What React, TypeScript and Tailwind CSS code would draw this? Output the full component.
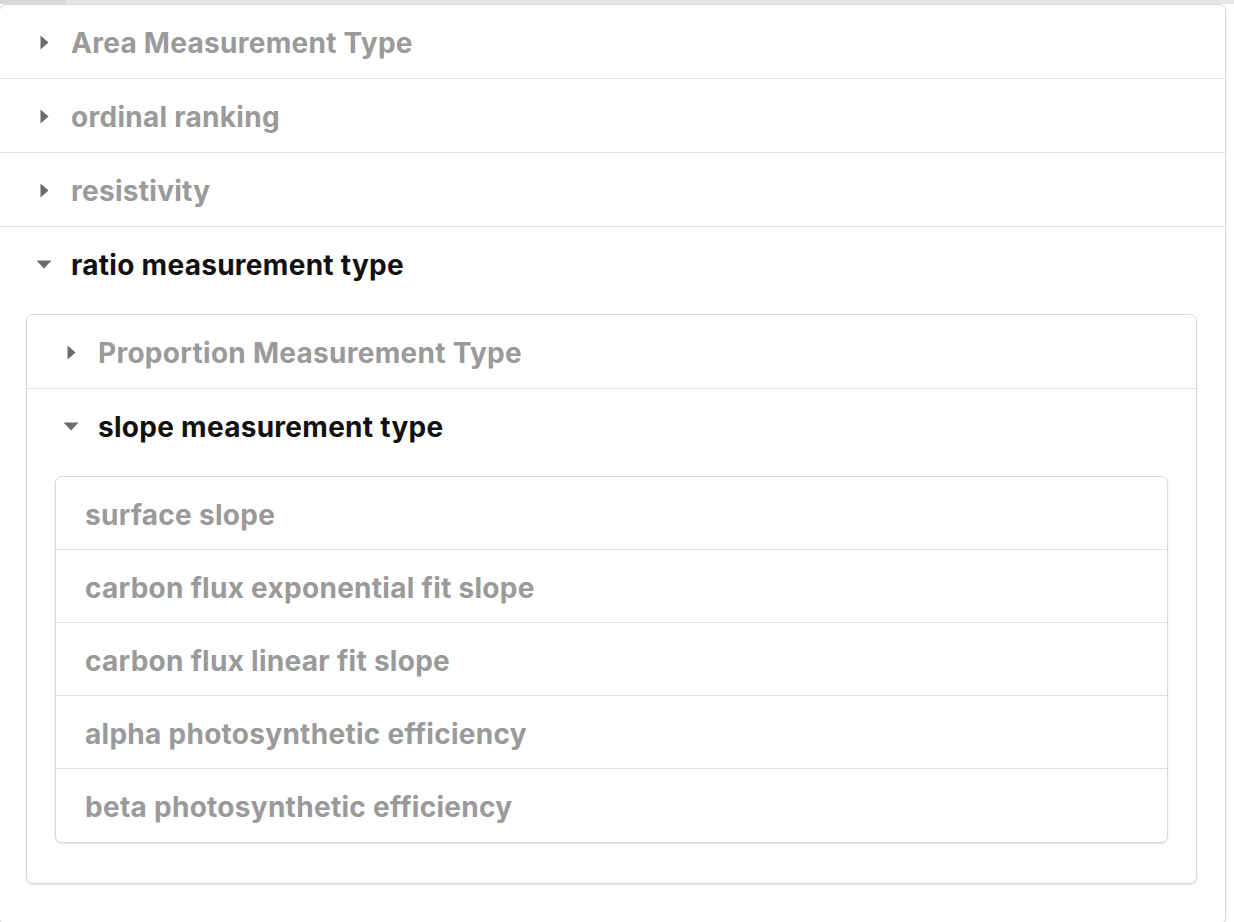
import { useState } from "react"

type Node = {
  label: string
  children?: Node[]
  leaves?: string[]
}

const tree: Node[] = [
  { label: "Area Measurement Type", children: [] },
  { label: "ordinal ranking", children: [] },
  { label: "resistivity", children: [] },
  {
    label: "ratio measurement type",
    children: [
      { label: "Proportion Measurement Type", children: [] },
      {
        label: "slope measurement type",
        leaves: [
          "surface slope",
          "carbon flux exponential fit slope",
          "carbon flux linear fit slope",
          "alpha photosynthetic efficiency",
          "beta photosynthetic efficiency",
        ],
      },
    ],
  },
]

function Caret({ open }: { open: boolean }) {
  return open ? (
    <svg width="16" height="9" viewBox="0 0 16 9" className="-ml-[4px] shrink-0">
      <path d="M0.5 0.5h15L8 8.5z" fill="#6b6b6b" />
    </svg>
  ) : (
    <svg width="9" height="15" viewBox="0 0 9 15" className="shrink-0">
      <path d="M0.5 0.5v14l8-7z" fill="#6b6b6b" />
    </svg>
  )
}

function Item({ node, defaultOpen }: { node: Node; defaultOpen: boolean }) {
  const [open, setOpen] = useState(defaultOpen)
  return (
    <div className="border-b border-[#e2e2e2] last:border-b-0">
      <button
        onClick={() => setOpen(!open)}
        className="flex h-[73px] w-full items-center pl-[40px] pt-[3px] text-left"
      >
        <span className="flex w-[31px] shrink-0 items-center pb-[2px]">
          <Caret open={open} />
        </span>
        <span
          className={
            open
              ? "text-[28px] font-bold tracking-[0.01em] text-[#111]"
              : "text-[28px] font-bold tracking-[0.01em] text-[#9a9a9a]"
          }
        >
          {node.label}
        </span>
      </button>
      {open && (
        <div className="pb-[40px] pl-[26px] pr-[28px] pt-[14px]">
          {node.children && (
            <Panel>
              {node.children.map((c) => (
                <Item key={c.label} node={c} defaultOpen={!!c.leaves || (c.children?.length ?? 0) > 0} />
              ))}
            </Panel>
          )}
          {node.leaves && (
            <div className="ml-[2px]">
              <Panel>
                {node.leaves.map((l) => (
                  <div
                    key={l}
                    className="flex h-[73px] items-center border-b border-[#e2e2e2] pl-[29px] pt-[3px] text-[28px] font-bold tracking-[0.01em] text-[#9a9a9a] last:border-b-0"
                  >
                    {l}
                  </div>
                ))}
              </Panel>
            </div>
          )}
        </div>
      )}
    </div>
  )
}

function Panel({ children }: { children: React.ReactNode }) {
  return (
    <div className="rounded-[7px] border border-[#dadada] bg-white shadow-[0_1px_2px_rgba(0,0,0,0.12)]">
      {children}
    </div>
  )
}

export default function App() {
  return (
    <div className="h-[922px] overflow-hidden bg-white font-['Inter','Liberation_Sans',sans-serif]">
      <div className="flex h-[4px] bg-[#e6e6e6]">
        <div className="w-[66px] bg-[#d8d8d8]" />
      </div>
      <div className="-ml-px w-[1227px] rounded-[7px] border border-[#dadada] bg-white shadow-[0_1px_2px_rgba(0,0,0,0.12)]">
        {tree.map((n) => (
          <Item key={n.label} node={n} defaultOpen={!!n.children && n.children.length > 0} />
        ))}
      </div>
    </div>
  )
}
